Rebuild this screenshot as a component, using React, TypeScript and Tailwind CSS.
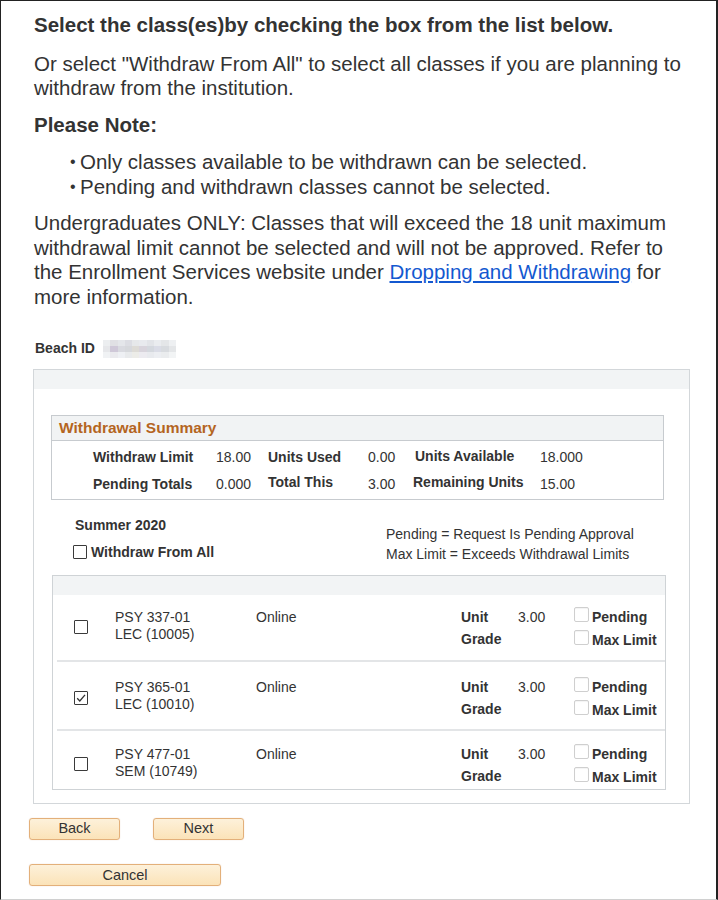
import React from 'react';

// --- small pieces ---
function Box({ checked = false }: { checked?: boolean }) {
  return (
    <span className="inline-flex w-[14px] h-[14px] border border-[#3a3a3a] bg-white rounded-[1px] items-center justify-center flex-shrink-0">
      {checked && (
        <svg width="12" height="12" viewBox="0 0 12 12">
          <path d="M2.2 6.3 L4.8 9 L10 2.8" fill="none" stroke="#333" strokeWidth="1.3" />
        </svg>
      )}
    </span>
  );
}

function FlagBox() {
  return <span className="inline-block w-[15px] h-[15px] border border-[#cfcfcf] bg-white rounded-[2px] shadow-[inset_0_1px_1px_rgba(0,0,0,0.05)] flex-shrink-0" />;
}

function Btn({ label, w }: { label: string; w: string }) {
  return (
    <button
      className={`${w} h-[22px] border border-[#e3b07a] rounded-[3px] bg-gradient-to-b from-[#fdf1da] to-[#fbe3b8] text-[14.5px] text-[#333] leading-none shadow-[0_0_1px_rgba(180,120,60,0.4)]`}
    >
      {label}
    </button>
  );
}

const blurCells = [
  '#eceef0', '#e0e0e4', '#e4e6ea', '#dcdde3', '#e6e8ea', '#e8eaee', '#e2e4e8', '#eaecef', '#e4e6e8', '#eef0f2',
  '#e6e7ea', '#cfc8d8', '#d9dae0', '#d6d8dc', '#dddbd6', '#d8d4dc', '#d4d8de', '#dadce6', '#d8dbdf', '#e4e6e8',
  '#f0f2f4', '#eaeaee', '#eef0f4', '#e8eaec', '#ecece8', '#ecebf0', '#e8eaee', '#eceef2', '#eaecee', '#f2f4f5',
];

const classes = [
  { course: 'PSY 337-01', sec: 'LEC (10005)', checked: false, h: 'h-[65px]', pt: 'pt-[14px]' },
  { course: 'PSY 365-01', sec: 'LEC (10010)', checked: true, h: 'h-[67px]', pt: 'pt-[17px]' },
  { course: 'PSY 477-01', sec: 'SEM (10749)', checked: false, h: 'h-[58px]', pt: 'pt-[15px]' },
];

export default function App() {
  return (
    <div className="w-[718px] h-[900px] bg-white border-l border-t border-r-2 border-[#222] border-b border-b-[#d0d0d0] font-['Liberation_Sans',Arial,sans-serif] text-[#333] overflow-hidden">
      {/* intro text */}
      <div className="pl-[33px] w-[690px] pt-[12px] text-[20.5px] leading-[24.4px]">
        <p className="font-bold">Select the class(es)by checking the box from the list below.</p>
        <p className="mt-[14.5px]">Or select "Withdraw From All" to select all classes if you are planning to withdraw from the institution.</p>
        <p className="mt-[12px] font-bold">Please Note:</p>
        <ul className="mt-[13px]">
          <li className="flex"><span className="w-[10px] ml-[36px] text-[16px]">•</span>Only classes available to be withdrawn can be selected.</li>
          <li className="flex"><span className="w-[10px] ml-[36px] text-[16px]">•</span>Pending and withdrawn classes cannot be selected.</li>
        </ul>
        <p className="mt-[12.5px]">
          Undergraduates ONLY: Classes that will exceed the 18 unit maximum withdrawal limit cannot be selected and will not be approved. Refer to the Enrollment Services website under{' '}
          <a href="#" className="text-[#1358d0] underline">Dropping and Withdrawing</a> for more information.
        </p>
      </div>

      {/* beach id */}
      <div className="ml-[34px] mt-[30.5px] flex items-center gap-[8px] text-[14px] font-bold h-[18px]">
        <span>Beach ID</span>
        <div className="grid grid-cols-10 w-[73px] h-[18px]">
          {blurCells.map((c, i) => (
            <div key={i} style={{ background: c }} />
          ))}
        </div>
      </div>

      {/* main panel */}
      <div className="ml-[32px] mt-[11px] w-[657px] border border-[#d3d7da]">
        <div className="h-[19px] bg-[#f2f4f5]" />

        {/* withdrawal summary */}
        <div className="mt-[26px] ml-[17px] w-[613px] border border-[#c7cbcf]">
          <div className="h-[25px] bg-[#f1f3f4] border-b border-[#c7cbcf] pl-[7px] flex items-center text-[15.5px] font-bold text-[#b4651f]">
            Withdrawal Summary
          </div>
          <div className="pt-[3px] pb-[1px] text-[14px]">
            <div className="flex items-center h-[27px] pl-[41px]">
              <span className="w-[123px] font-bold">Withdraw Limit</span>
              <span className="w-[52px]">18.00</span>
              <span className="w-[100px] font-bold">Units Used</span>
              <span className="w-[47px]">0.00</span>
              <span className="w-[125px] font-bold -mt-[2px]">Units Available</span>
              <span>18.000</span>
            </div>
            <div className="flex items-center h-[27px] pl-[41px]">
              <span className="w-[123px] font-bold">Pending Totals</span>
              <span className="w-[52px]">0.000</span>
              <span className="w-[100px] font-bold -mt-[4px]">Total This</span>
              <span className="w-[47px]">3.00</span>
              <span className="w-[127px] font-bold -mt-[4px] -ml-[2px]">Remaining Units</span>
              <span>15.00</span>
            </div>
          </div>
        </div>

        {/* term + legend */}
        <div className="flex items-start ml-[39px] text-[14px]">
          <div className="w-[313px] pt-[17px]">
            <div className="pl-[2px] font-bold leading-[17px]">Summer 2020</div>
            <label className="mt-[10px] flex items-center gap-[4px] font-bold leading-[17px]">
              <Box />
              Withdraw From All
            </label>
          </div>
          <div className="pt-[24px] leading-[20px]">
            <div>Pending = Request Is Pending Approval</div>
            <div>Max Limit = Exceeds Withdrawal Limits</div>
          </div>
        </div>

        {/* class list */}
        <div className="mt-[11px] mb-[13px] ml-[18px] w-[614px] border border-[#cfd3d6] text-[14px]">
          <div className="h-[19px] bg-[#f2f4f5]" />
          {classes.map((c, i) => (
            <div key={c.course}>
              {i > 0 && <div className="ml-[4px] h-[2px] bg-[#e3e5e7]" />}
              <div className={`${c.h} ${c.pt} pl-[21px] flex items-start`}>
                <div className="w-[41px] pt-[10px]">
                  <Box checked={c.checked} />
                </div>
                <div className="w-[141px] leading-[17px]">
                  <div>{c.course}</div>
                  <div>{c.sec}</div>
                </div>
                <div className="w-[205px] leading-[17px]">Online</div>
                <div className="w-[57px] font-bold leading-[22px] -mt-[3px]">
                  <div>Unit</div>
                  <div>Grade</div>
                </div>
                <div className="w-[56px] leading-[17px]">3.00</div>
                <div className="font-bold -mt-[2px]">
                  <div className="flex items-start gap-[3px] h-[23px]">
                    <FlagBox />
                    <span className="mt-[2px] leading-[17px]">Pending</span>
                  </div>
                  <div className="flex items-start gap-[3px] h-[23px]">
                    <FlagBox />
                    <span className="mt-[2px] leading-[17px]">Max Limit</span>
                  </div>
                </div>
              </div>
            </div>
          ))}
        </div>
      </div>

      {/* buttons */}
      <div className="ml-[28px] mt-[14px] flex gap-[33px]">
        <Btn label="Back" w="w-[91px]" />
        <Btn label="Next" w="w-[91px]" />
      </div>
      <div className="ml-[28px] mt-[23px]">
        <Btn label="Cancel" w="w-[192px]" />
      </div>
    </div>
  );
}
